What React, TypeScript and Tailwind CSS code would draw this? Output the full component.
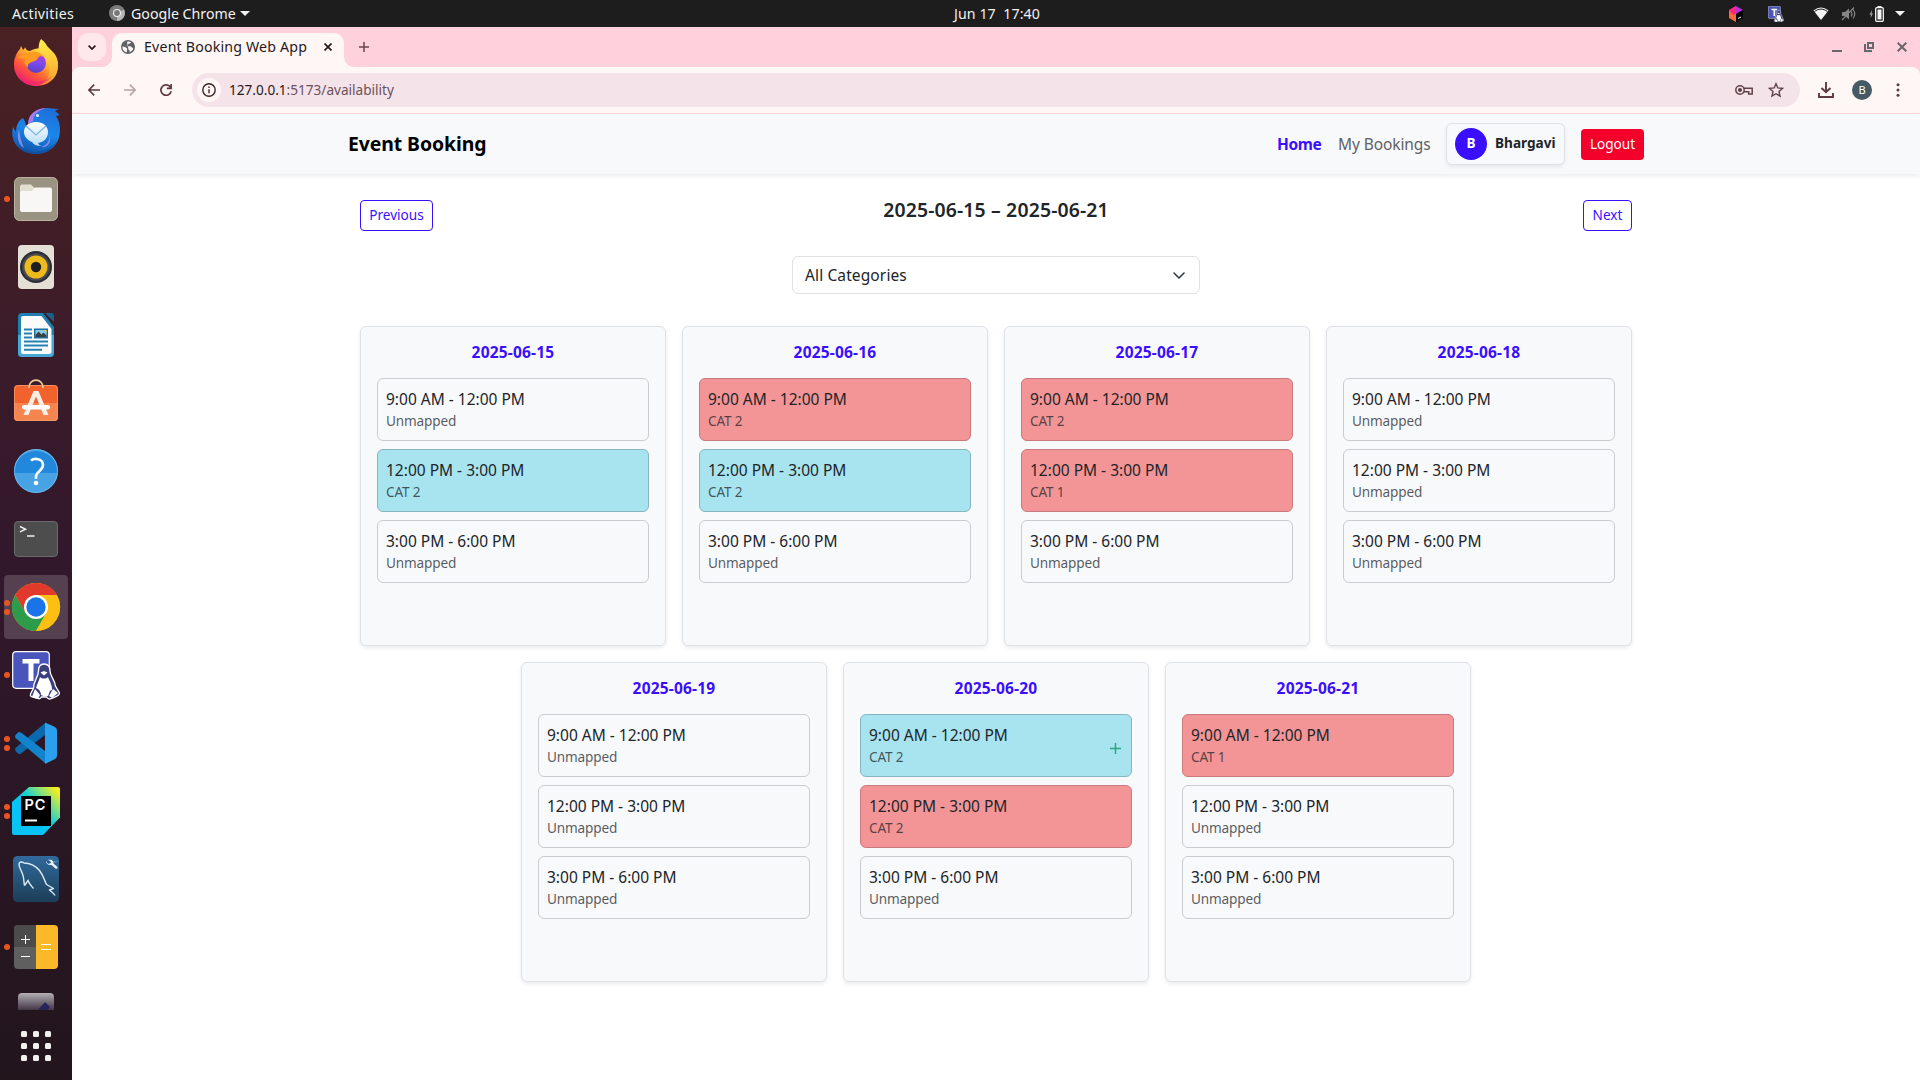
import React from "react";

type Status = "unmapped" | "open" | "full";
type Slot = { time: string; label: string; status: Status; add?: boolean };
type Day = { date: string; slots: Slot[] };

const T1 = "9:00 AM - 12:00 PM";
const T2 = "12:00 PM - 3:00 PM";
const T3 = "3:00 PM - 6:00 PM";

const un = (time: string): Slot => ({ time, label: "Unmapped", status: "unmapped" });
const open = (time: string, label: string, add = false): Slot => ({ time, label, status: "open", add });
const full = (time: string, label: string): Slot => ({ time, label, status: "full" });

const days: Day[] = [
  { date: "2025-06-15", slots: [un(T1), open(T2, "CAT 2"), un(T3)] },
  { date: "2025-06-16", slots: [full(T1, "CAT 2"), open(T2, "CAT 2"), un(T3)] },
  { date: "2025-06-17", slots: [full(T1, "CAT 2"), full(T2, "CAT 1"), un(T3)] },
  { date: "2025-06-18", slots: [un(T1), un(T2), un(T3)] },
  { date: "2025-06-19", slots: [un(T1), un(T2), un(T3)] },
  { date: "2025-06-20", slots: [open(T1, "CAT 2", true), full(T2, "CAT 2"), un(T3)] },
  { date: "2025-06-21", slots: [full(T1, "CAT 1"), un(T2), un(T3)] },
];

const slotStyle: Record<Status, string> = {
  unmapped: "border-[#cacccf] bg-[#f8f9fb]",
  open: "border-[#86b6c0] bg-[#a8e4f0]",
  full: "border-[#c87a7d] bg-[#f39596]",
};

function Icon({ size = 64, children }: { size?: number; children: React.ReactNode }) {
  return (
    <svg width={size} height={size} viewBox="0 0 64 64" className="block">
      {children}
    </svg>
  );
}

function Firefox() {
  return (
    <Icon>
      <defs>
        <linearGradient id="ff1" x1="0.85" y1="0.1" x2="0.2" y2="0.95">
          <stop offset="0" stopColor="#fff44f" />
          <stop offset="0.35" stopColor="#ffb22c" />
          <stop offset="0.65" stopColor="#ff5a36" />
          <stop offset="1" stopColor="#ec1a7a" />
        </linearGradient>
        <linearGradient id="ff2" x1="0.6" y1="0" x2="0.4" y2="1">
          <stop offset="0" stopColor="#b833e1" />
          <stop offset="0.5" stopColor="#7a4bf0" />
          <stop offset="1" stopColor="#5b3fc4" />
        </linearGradient>
        <linearGradient id="ff3" x1="0" y1="0" x2="0" y2="1">
          <stop offset="0" stopColor="#fff04a" />
          <stop offset="1" stopColor="#ff9a2a" />
        </linearGradient>
      </defs>
      <path d="M11 27c1-4 3-7 5-9l1-3 2 4c1-1 2-2 2-3 1 3 3 4 5 4 8-5 17-3 21 3l5 4c3 8 2 15-2 20-5 6-11 8-18 8-12 0-22-9-22-21 0-3 0-5 1-7z" fill="url(#ff1)" />
      <path d="M37 8c3 2 5 5 6 7l5 5c4 4 6 8 6 14 0 10-7 19-18 20 9-5 12-14 8-22-2-5-7-7-9-12-1-4 0-9 2-12z" fill="url(#ff3)" />
      <circle cx="32" cy="32" r="10" fill="url(#ff2)" />
      <path d="M23 22c5-2 12-2 15 2l2 2c-3-1-5-1-6 1-1 3-4 3-6 4-3 1-5 3-4 6-4-4-5-8-1-9l-9-1c2-3 5-5 9-5z" fill="#ff9b20" />
      <path d="M14 42c5 9 24 12 34 3-5 7-11 9-17 9-7 0-14-4-17-12z" fill="#f0256f" opacity="0.6" />
    </Icon>
  );
}

function Thunderbird() {
  return (
    <Icon>
      <defs>
        <linearGradient id="tb1" x1="0.7" y1="0" x2="0.4" y2="1">
          <stop offset="0" stopColor="#1f6fd8" />
          <stop offset="0.5" stopColor="#1b86ea" />
          <stop offset="1" stopColor="#1154a8" />
        </linearGradient>
        <linearGradient id="tb2" x1="0" y1="0" x2="0" y2="1">
          <stop offset="0" stopColor="#ffffff" />
          <stop offset="1" stopColor="#b5dcfa" />
        </linearGradient>
      </defs>
      <path d="M9 28l3 5c0-7 3-12 7-14 2 3 3 6 3 9l3-1c1-9 8-18 18-18l12 1-4 2 5 4-4 1c3 4 4 9 4 14 0 14-10 24-24 24C18 55 5 45 9 28z" fill="url(#tb1)" />
      <path d="M24 25c0-9 7-16 19-16-9 2-13 6-14 13z" fill="#a57bf0" />
      <path d="M15 30c-3 9 0 16 5 19-3-6-4-12-5-19zM45 33c2 7-1 13-8 15 6 1 12-4 8-15z" fill="#7b8df0" />
      <path d="M32 23c7 0 12 4 12 10s-4 10-10 11c1 2 2 3 4 3-5 0-8-1-10-4-5-2-8-6-8-10 0-6 5-10 12-10z" fill="url(#tb2)" />
      <path d="M22 27l10 9 10-9" stroke="#7fb3e2" strokeWidth="1.3" fill="none" />
      <circle cx="33.500" cy="16.500" r="1.500" fill="#e6f1ff" />
      <path d="M12 44c10 12 30 12 41-2-5 9-12 13-21 13-8 0-16-4-20-11z" fill="#0e4c9c" opacity="0.6" />
    </Icon>
  );
}

function Files() {
  return (
    <Icon>
      <rect x="10.500" y="10.500" width="43" height="43" rx="5" fill="#9a9381" stroke="#b9b3a2" />
      <path d="M16 19.500q0-2 2-2h9l4 4h15q2 0 2 2V30H16z" fill="#e2dfd0" />
      <path d="M16 26q0-2 2-2h10l3-3.500h15q2 0 2 2V43q0 2-2 2H18q-2 0-2-2z" fill="#f8f7f5" />
    </Icon>
  );
}

function Rhythmbox() {
  return (
    <Icon>
      <rect x="14" y="10" width="36" height="44" rx="4" fill="#e4e0d6" />
      <circle cx="32" cy="32" r="16" fill="#2c2d35" />
      <circle cx="32" cy="32" r="13.800" fill="#4a4b52" />
      <circle cx="32" cy="32" r="11.500" fill="#eebb1c" />
      <circle cx="32" cy="32" r="5.200" fill="#1f1f1f" />
    </Icon>
  );
}

function Writer() {
  return (
    <Icon>
      <path d="M18 10h21l11 14v26q0 4-4 4H18q-4 0-4-4V14q0-4 4-4z" fill="#1f7fb0" />
      <path d="M14 32h36v18q0 4-4 4H18q-4 0-4-4z" fill="#47a7d6" />
      <path d="M41 10h6q3 0 3 3v6z" fill="#15618c" />
      <path d="M19 13h18.500l10 13v22.500q0 2.500-2.500 2.500H19q-2 0-2-2V15q0-2 2-2z" fill="#fbfbfb" />
      <path d="M20 26.500h8M20 30.500h8M20 34.500h8M20 38.500h24M20 42.500h24M20 46.800h18" stroke="#2782b4" strokeWidth="2" />
      <rect x="30" y="25.500" width="14" height="10" fill="#1a6f9f" />
      <rect x="31.500" y="27" width="11" height="7" fill="#8ccbe8" />
      <path d="M31.500 34v-2l3-3.500 3 3 2-2 3 3V34z" fill="#3b3f45" />
      <path d="M40 27h2.500v3z" fill="#f4c61c" />
    </Icon>
  );
}

function Software() {
  return (
    <Icon>
      <path d="M14 14h36q4 0 4 4v28q0 4-4 4H14q-4 0-4-4V18q0-4 4-4z" fill="#f2622c" />
      <path d="M10 32h44v14q0 4-4 4H14q-4 0-4-4z" fill="#f5844f" />
      <path d="M10.500 18q0-3.500 3.500-3.500h36q3.500 0 3.500 3.500v28q0 3.500-3.500 3.500H14q-3.500 0-3.500-3.500z" fill="none" stroke="#f59a6c" strokeWidth="0.800" />
      <path d="M25 17c-.5-10.500 14.500-10.500 14 0" stroke="#eecb98" strokeWidth="1.600" fill="none" />
      <path d="M29.500 20h5l10 24h-5L32 25.500 24.500 44h-5z" fill="#fbeee6" />
      <rect x="18" y="34" width="28" height="4.600" rx="2.300" fill="#fff" />
    </Icon>
  );
}

function Help() {
  return (
    <Icon>
      <circle cx="32" cy="32" r="22" fill="#47a3e3" />
      <path d="M10 34a22 22 0 0 1 44 0z" fill="#2288dc" />
      <circle cx="32" cy="32" r="21.500" fill="none" stroke="#74bdee" strokeWidth="0.800" />
      <path d="M27 21.500c3-2.500 12-2.500 12 4.500 0 6-7 6-7 12v2" stroke="#fff" strokeWidth="2.600" fill="none" />
      <circle cx="32" cy="44" r="2.300" fill="#fff" />
    </Icon>
  );
}

function Terminal() {
  return (
    <Icon>
      <rect x="10.500" y="14.500" width="43" height="35" rx="3.500" fill="#4d4d4d" stroke="#6b6b6b" />
      <path d="M16 19.500l5.500 2.700-5.500 2.700M23 29h7.500" stroke="#f2f2f2" strokeWidth="1.500" fill="none" />
    </Icon>
  );
}

function Chrome() {
  return (
    <Icon>
      <circle cx="32" cy="32" r="24" fill="#fbbc05" />
      <path d="M32 20L52.800 20A24 24 0 0 0 11.200 20L21.600 38z" fill="#e2392d" />
      <path d="M11.200 20A24 24 0 0 0 32 56L42.400 38 32 32 21.600 38z" fill="#2c9c4b" />
      <path d="M32 56A24 24 0 0 0 52.800 20H32l10.400 18z" fill="#fcbf12" />
      <circle cx="32" cy="32" r="12" fill="#fff" />
      <circle cx="32" cy="32" r="9.700" fill="#1a73e8" />
    </Icon>
  );
}

function TeamsArt() {
  return (
    <>
      <rect x="8.700" y="8.700" width="36.600" height="36.600" rx="3.500" fill="#4a55bb" stroke="#fff" strokeWidth="1.200" />
      <path d="M18.500 16h17v4.500h-6V38h-5V20.500h-6z" fill="#fff" />
      <path d="M40 21c4 0 6 3 6 7 0 5 5 9 5.500 15l4 7c0 3-3 3-8 5.500-3 1.500-4 0-5-1.500h-5c-1 2-3 2-5 1-4-1-7-1-6-4l3-6c0-7 5-11 5-17 0-4 2-7 5.500-7z" fill="#3d3f7d" stroke="#fff" strokeWidth="1.300" />
      <path d="M36 34c2 2 6 2 8 0 2 5 4 8 4 13-3 0-3 5-4 6-3 1-5 0-7-1 0-3-2-6-5-7 1-4 3-7 4-11z" fill="#fff" />
      <path d="M36.500 29.500l3.500-1.500 3.500 1.500-3.500 3z" fill="#fff" />
      <path d="M31 46l5 6-2 4-6-2zM49 46l5 4-6 5-3-2z" fill="#fff" />
    </>
  );
}

function VSCode() {
  return (
    <Icon>
      <path d="M41 12v12L17 42.500q-1.500 1-3 0l-2.500-2.500q-1-1.500 0-3z" fill="#0c68ad" />
      <path d="M41 52V40L17 21.500q-1.500-1-3 0L11.500 24q-1 1.500 0 3z" fill="#1283cd" />
      <path d="M41 11.500l9.500 4.300q2.500 1 2.500 3.700v25q0 2.700-2.500 3.700L41 53z" fill="#2ba0ef" />
    </Icon>
  );
}

function PyCharm() {
  return (
    <Icon>
      <defs>
        <linearGradient id="pc1" gradientUnits="userSpaceOnUse" x1="26" y1="36" x2="54" y2="10">
          <stop offset="0" stopColor="#08c3f5" />
          <stop offset="0.3" stopColor="#18cfd0" />
          <stop offset="0.65" stopColor="#8ee374" />
          <stop offset="0.95" stopColor="#f4ee22" />
        </linearGradient>
      </defs>
      <path d="M25 8h29q2 0 2 2v28.500L39 56H10q-2 0-2-2V23z" fill="url(#pc1)" />
      <rect x="17" y="17" width="30" height="30" fill="#000" />
      <text x="20.500" y="31" fill="#fff" fontFamily="Inter, sans-serif" fontSize="14.500" fontWeight="600" textLength="21">PC</text>
      <rect x="21" y="40.500" width="12" height="2" fill="#fff" />
    </Icon>
  );
}

function MySQL() {
  return (
    <Icon>
      <defs>
        <linearGradient id="my1" x1="0" y1="0" x2="0" y2="1">
          <stop offset="0" stopColor="#316a9b" />
          <stop offset="1" stopColor="#1c3e58" />
        </linearGradient>
      </defs>
      <rect x="9" y="9" width="46" height="46" rx="4.500" fill="url(#my1)" />
      <path d="M20.500 38.500c-1-5-.500-7-1.500-10-1-4-4-8-4-11 0-3 3-3 5-1.500 7 0 12 3.500 15.500 7.500 4 5 5 10 7 14l7 4-4 1.500c2 2 4 3 5.500 5.500" stroke="#dcecf6" strokeWidth="1.400" fill="none" strokeLinejoin="round" />
      <path d="M20.500 38.500l3.500-5c1 3 3 5 5.500 8" stroke="#dcecf6" strokeWidth="1.400" fill="none" />
      <path d="M44 12.500l3 .500 2 2.500 6-1-8 .500zM42 14l2 3 3-1-.500-3.500c2 .500 3 2 3 4l4 3.500q.500 2-1.500 2l-4.500-4c-3 .500-5.500-1-5.500-4z" fill="#e9f2f8" />
    </Icon>
  );
}

function Calculator() {
  return (
    <Icon>
      <path d="M14 10h18v44H14q-4 0-4-4V14q0-4 4-4z" fill="#5f5f5f" />
      <path d="M14 10h18v22H10V14q0-4 4-4z" fill="#4b4b4b" />
      <path d="M32 10h18q4 0 4 4v36q0 4-4 4H32z" fill="#fbb829" />
      <path d="M21.500 20v9M17 24.500h9M17 41.500h9M37 29.500h10M37 34.500h10" stroke="#fff" strokeWidth="1" />
    </Icon>
  );
}

function Hidden() {
  return (
    <Icon>
      <defs>
        <linearGradient id="hd1" x1="0" y1="0" x2="0" y2="1">
          <stop offset="0" stopColor="#b3aeb4" />
          <stop offset="0.420" stopColor="#3a2c3a" />
        </linearGradient>
      </defs>
      <rect x="14" y="10" width="36" height="44" rx="4" fill="url(#hd1)" />
      <path d="M33 28l8-9 5 5-3 4z" fill="#26255c" />
    </Icon>
  );
}

const dock: { id: string; art: React.ReactNode; dots: number; active?: boolean }[] = [
  { id: "firefox", art: <Firefox />, dots: 0 },
  { id: "thunderbird", art: <Thunderbird />, dots: 0 },
  { id: "files", art: <Files />, dots: 1 },
  { id: "rhythmbox", art: <Rhythmbox />, dots: 0 },
  { id: "writer", art: <Writer />, dots: 0 },
  { id: "software", art: <Software />, dots: 0 },
  { id: "help", art: <Help />, dots: 0 },
  { id: "terminal", art: <Terminal />, dots: 0 },
  { id: "chrome", art: <Chrome />, dots: 2, active: true },
  { id: "teams", art: <Icon><TeamsArt /></Icon>, dots: 1 },
  { id: "vscode", art: <VSCode />, dots: 2 },
  { id: "pycharm", art: <PyCharm />, dots: 2 },
  { id: "mysql", art: <MySQL />, dots: 0 },
  { id: "calculator", art: <Calculator />, dots: 1 },
  { id: "hidden", art: <Hidden />, dots: 0 },
];

function Dock() {
  return (
    <nav className="flex w-[72px] shrink-0 flex-col bg-linear-to-b from-[#4a2123] via-[#32182c] to-[#22151c] pt-0.5">
      <div className="flex h-[981px] flex-col overflow-hidden">
        {dock.map((d) => (
          <div key={d.id} className="flex h-[68px] shrink-0 items-center px-1">
            <div className={d.active ? "relative h-16 w-16 rounded bg-[#55404f]" : "relative h-16 w-16"}>
              {d.art}
              <div className="absolute top-0 left-0 flex h-16 w-1.5 flex-col items-center justify-center gap-[3px]">
                {d.dots > 0 && <span className="h-1.5 w-1.5 rounded-full bg-[#e95420]" />}
                {d.dots > 1 && <span className="h-1.5 w-1.5 rounded-full bg-[#e95420]" />}
              </div>
            </div>
          </div>
        ))}
      </div>
      <div className="mt-[21px] ml-[21px] grid w-[30px] grid-cols-3 gap-1.5">
        {Array.from({ length: 9 }, (_, i) => (
          <span key={i} className="h-1.5 w-1.5 rounded-[1.5px] bg-[#f2f0ee]" />
        ))}
      </div>
    </nav>
  );
}

function TopBar() {
  return (
    <header className="flex h-[27px] shrink-0 items-center bg-[#1d1d1d] text-[14.2px] text-[#f2f2f2]">
      <div className="flex w-[954px] items-center pl-3">
        <span className="w-[97px] tracking-[0.3px] whitespace-nowrap">Activities</span>
        <svg width="16" height="16" viewBox="0 0 16 16">
          <circle cx="8" cy="8" r="8" fill="#7c7c7c" />
          <path d="M8 8L15 4.500A8 8 0 0 1 8 16z" fill="#b5b5b5" />
          <circle cx="8" cy="8" r="4" fill="#f0f0f0" />
          <circle cx="8" cy="8" r="2.900" fill="#777" />
        </svg>
        <span className="ml-1.5 w-[109px] whitespace-nowrap">Google Chrome</span>
        <svg width="10" height="5" viewBox="0 0 10 5"><path d="M0 0h10L5 5z" fill="#f2f2f2" /></svg>
      </div>
      <span className="tracking-[0.08px] whitespace-pre">Jun 17  17:40</span>
      <div className="ml-auto flex items-center pr-[15px]">
        <svg width="14" height="16" viewBox="0 0 14 16">
          <path d="M7 0L14 4 7 8 0 4z" fill="#c02be0" />
          <path d="M0 4l7 4v8L0 12z" fill="#ff6a3a" />
          <path d="M0 4l7-4v8l-3 1z" fill="#fb2a78" />
          <path d="M7 8l7-4v8l-7 4z" fill="#000" />
          <path d="M9 12.500l3-1.500" stroke="#fff" />
        </svg>
        <svg className="ml-[25px]" width="16" height="16" viewBox="8 8 48 48"><TeamsArt /></svg>
        <svg className="ml-[29px]" width="16" height="13" viewBox="0 0 16 13">
          <path d="M0.500 3.500Q8-2.500 15.500 3.500L8 13z" fill="#f5f5f5" />
          <path d="M1.500 4.500Q8-.500 14.500 4.500" stroke="#1d1d1d" strokeWidth="1" fill="none" />
        </svg>
        <svg className="ml-3" width="16" height="14" viewBox="0 0 16 14" fill="none" stroke="#858585" strokeWidth="1.200">
          <path d="M1 5h3l4-3.500v11L4 9H1z" fill="#858585" stroke="none" />
          <path d="M10 4.500q2 2.500 0 5M12 2.500q3.500 4.500 0 9M1 13L13 .500" />
        </svg>
        <svg className="ml-3" width="15" height="16" viewBox="0 0 15 16">
          <path d="M3 4L0.500 8.500h1.500L1.500 12 4 7.500H2.500z" fill="#aaa" />
          <rect x="6.700" y="1.700" width="7.600" height="13.600" rx="1" fill="none" stroke="#f5f5f5" strokeWidth="1.300" />
          <rect x="8.500" y="3.500" width="4" height="10" fill="#f5f5f5" />
          <rect x="8.500" y="0" width="4" height="1.500" fill="#f5f5f5" />
        </svg>
        <svg className="ml-[11px]" width="10" height="5" viewBox="0 0 10 5"><path d="M0 0h10L5 5z" fill="#f2f2f2" /></svg>
      </div>
    </header>
  );
}

function TabStrip() {
  return (
    <div className="flex h-10 shrink-0 items-end bg-[#ffd1dc] pl-1.5">
      <div className="mb-1.5 flex h-7 w-7 items-center justify-center rounded-[10px] bg-[#ffe8ec]">
        <svg width="8" height="5" viewBox="0 0 8 5" fill="none" stroke="#28181b" strokeWidth="1.700"><path d="M.600.600L4 4l3.400-3.400" /></svg>
      </div>
      <div className="-ml-1 h-2.5 w-2.5 bg-[#fff7f5]"><div className="h-2.5 w-2.5 rounded-br-[10px] bg-[#ffd1dc]" /></div>
      <div className="flex h-[34px] w-[232px] items-center rounded-t-[10px] bg-[#fff7f5] pb-1.5 pl-[9px]">
        <svg width="14" height="14" viewBox="0 0 14 14">
          <circle cx="7" cy="7" r="7" fill="#5f6368" />
          <path d="M1.500 6.500c2 .500 4 .500 4.500 2 .500 1-.500 2 0 3.800C3 12 1.200 9.500 1.500 6.500zM6 2c1.500-.800 3-.500 4 .200-.500 1-1.500 1.500-2.700 1.500C7 5 6.500 5.500 5 5.500c0 0 2.500.800 4 .800 1.500.200 1.500 1.500 3.200 1.700-.200 2-1.800 3.700-3.700 4.200.500-1.500-.200-2.200-1-2.800" fill="#fff7f5" />
        </svg>
        <span className="ml-[9px] w-[180px] text-[14.2px] tracking-[0.18px] whitespace-nowrap text-[#28181b]">Event Booking Web App</span>
        <svg width="8" height="8" viewBox="0 0 8 8" stroke="#28181b" strokeWidth="1.700"><path d="M.500.500l7 7M7.500.500l-7 7" /></svg>
      </div>
      <div className="h-2.5 w-2.5 bg-[#fff7f5]"><div className="h-2.5 w-2.5 rounded-bl-[10px] bg-[#ffd1dc]" /></div>
      <svg className="mb-[15px] ml-[5px]" width="10" height="10" viewBox="0 0 10 10" stroke="#6a464d" strokeWidth="1.500"><path d="M5 0v10M0 5h10" /></svg>
      <div className="mb-[15px] ml-auto flex items-end pr-[13px]">
        <svg width="10" height="10" viewBox="0 0 10 10"><rect y="8" width="10" height="2" fill="#66666b" /></svg>
        <svg className="ml-[22px]" width="10" height="10" viewBox="0 0 10 10" fill="none" stroke="#66666b" strokeWidth="2"><path d="M4 1h5v5H4zM1 2v7h7" /></svg>
        <svg className="ml-[23px]" width="10" height="10" viewBox="0 0 10 10" stroke="#66666b" strokeWidth="2"><path d="M.700.700l8.600 8.600M9.300.700L.700 9.300" /></svg>
      </div>
    </div>
  );
}

function Toolbar() {
  return (
    <div className="flex h-[47px] shrink-0 bg-[#ffd1dc]">
      <div className="flex flex-1 items-center rounded-t-lg border-b border-[#fbd3da] bg-[#fff7f5] pl-4">
        <svg width="12" height="12" viewBox="0 0 12 12" fill="none" stroke="#5f3a41" strokeWidth="1.600"><path d="M12 6H1M6.200.600L.900 6l5.300 5.400" /></svg>
        <svg className="ml-6" width="12" height="12" viewBox="0 0 12 12" fill="none" stroke="#b9a3a6" strokeWidth="1.600"><path d="M0 6h11M5.800.600L11.100 6l-5.300 5.400" /></svg>
        <svg className="ml-6" width="12" height="12" viewBox="0 0 12 12" fill="none" stroke="#5f3a41" strokeWidth="1.700"><path d="M11.200 7.200A5.200 5.200 0 1 1 9.800 2.400L11 3.800M11.200 0v4.400H6.800" /></svg>
        <div className="ml-5 flex h-[34px] w-[1608px] items-center rounded-full bg-[#f5e3ea] pl-[5px]">
          <div className="flex h-6 w-6 items-center justify-center rounded-full bg-[#fff7f5]">
            <svg width="14" height="14" viewBox="0 0 14 14" fill="none" stroke="#3a2529" strokeWidth="1.400"><circle cx="7" cy="7" r="6.200" /><path d="M7 6.200v4M7 3.600v1.500" /></svg>
          </div>
          <span className="ml-2 text-[13.6px] whitespace-nowrap text-[#6b5158]"><span className="text-[#28181b]">127.0.0.1</span>:5173/availability</span>
          <svg className="ml-auto" width="18" height="12" viewBox="0 0 18 12" fill="none" stroke="#5f4349" strokeWidth="1.500">
            <circle cx="5" cy="6" r="4.200" /><circle cx="5" cy="6" r="1.300" fill="#5f4349" /><path d="M9 4.300h8.200v5.700h-3.500V7.800H9" />
          </svg>
          <svg className="mr-4 ml-[15px]" width="16" height="16" viewBox="0 0 16 16" fill="none" stroke="#5f4349" strokeWidth="1.400"><path d="M8 1.700l1.850 4.250 4.650.450-3.500 3.100 1 4.600L8 11.700l-4 2.400 1-4.600L1.500 6.400l4.650-.450z" /></svg>
        </div>
        <svg className="ml-[18px]" width="16" height="16" viewBox="0 0 16 16" fill="none" stroke="#5f3a41" strokeWidth="1.900"><path d="M8 0v10M3.500 6L8 10.300 12.500 6M1 11v4h14v-4" /></svg>
        <div className="ml-[18px] flex h-5 w-5 items-center justify-center rounded-full bg-[#455a64] text-[11px] text-white">B</div>
        <svg className="ml-6" width="4" height="14" viewBox="0 0 4 14" fill="#5f3a41"><circle cx="2" cy="1.700" r="1.500" /><circle cx="2" cy="7" r="1.500" /><circle cx="2" cy="12.300" r="1.500" /></svg>
      </div>
    </div>
  );
}

function NavBar() {
  return (
    <div className="flex h-[60px] shrink-0 items-center bg-[#f8f9fb] pr-[276px] pl-[276px] shadow-[0_2px_4px_rgba(0,0,0,0.075)]">
      <span className="text-[19.4px] font-bold tracking-[-0.08px] whitespace-nowrap text-black">Event Booking</span>
      <div className="ml-auto flex items-center">
        <span className="w-[61px] pt-px text-[15.5px] font-bold tracking-[-0.4px] whitespace-nowrap text-[#3a0fff]">Home</span>
        <span className="w-[108px] pt-px text-[15.5px] tracking-[-0.1px] whitespace-nowrap text-[#5f6164]">My Bookings</span>
        <div className="flex h-[42px] w-[119px] items-center rounded-md border border-[#dee2e6] bg-[#f8f9fb] pl-2 shadow-[0_2px_4px_rgba(0,0,0,0.075)]">
          <div className="flex h-8 w-8 items-center justify-center rounded-full bg-[#3a0fff] pb-px text-[13.6px] font-bold text-white">B</div>
          <span className="ml-2 pb-px text-[13.6px] font-bold whitespace-nowrap text-[#212529]">Bhargavi</span>
        </div>
        <button className="ml-4 h-[31px] w-[63px] rounded bg-[#f3002b] text-[13.6px] text-white">Logout</button>
      </div>
    </div>
  );
}

function SlotBox({ slot }: { slot: Slot }) {
  return (
    <div className={`flex h-[63px] items-center justify-between rounded-md border pr-2.5 pl-2 ${slotStyle[slot.status]}`}>
      <div>
        <div className="h-[22px] text-[15.5px] leading-[22px] whitespace-nowrap text-[#212529]">{slot.time}</div>
        <div className="h-[21px] text-[13.6px] leading-[21px] tracking-[-0.15px] whitespace-nowrap text-[#212529]/75">{slot.label}</div>
      </div>
      {slot.add && (
        <svg className="mt-1.5" width="11" height="11" viewBox="0 0 11 11" stroke="#2aa680" strokeWidth="1.500"><path d="M5.500 0v11M0 5.500h11" /></svg>
      )}
    </div>
  );
}

function DayCard({ day }: { day: Day }) {
  return (
    <section className="flex h-80 w-[306px] flex-col gap-2 rounded-md border border-[#dee2e6] bg-[#f8f9fb] px-4 pt-4 shadow-[0_2px_4px_rgba(0,0,0,0.075)]">
      <h5 className="h-[27px] text-center text-[15.5px] leading-[19px] font-bold tracking-[0.2px] text-[#3a0fff]">{day.date}</h5>
      {day.slots.map((s) => (
        <SlotBox key={s.time} slot={s} />
      ))}
    </section>
  );
}

export default function App() {
  return (
    <div className="flex h-[1080px] w-[1920px] flex-col overflow-hidden bg-white font-['Noto_Sans',sans-serif]">
      <TopBar />
      <div className="flex min-h-0 flex-1">
        <Dock />
        <div className="flex min-w-0 flex-1 flex-col">
          <TabStrip />
          <Toolbar />
          <NavBar />
          <main className="flex flex-col items-center pt-[26px]">
            <div className="grid h-[31px] w-[1272px] grid-cols-[73px_1fr_73px]">
              <button className="h-[31px] w-[73px] rounded border border-[#3a0fff] text-[13.6px] text-[#3a0fff]">Previous</button>
              <h4 className="text-center text-[19.4px] leading-[20px] font-semibold tracking-[0.16px] text-[#212529]">2025-06-15 – 2025-06-21</h4>
              <button className="h-[31px] w-[49px] justify-self-end rounded border border-[#3a0fff] text-[13.6px] text-[#3a0fff]">Next</button>
            </div>
            <div className="mt-[25px] flex h-[38px] w-[408px] items-center justify-between rounded-md border border-[#dee2e6] bg-white pr-3.5 pl-3 text-[15.5px] text-[#212529]">
              <span className="pt-px tracking-[0.12px]">All Categories</span>
              <svg width="12" height="7" viewBox="0 0 12 7" fill="none" stroke="#343a40" strokeWidth="1.600" strokeLinecap="round" strokeLinejoin="round"><path d="M1 1l5 5 5-5" /></svg>
            </div>
            <div className="mt-8 flex w-[1272px] flex-wrap justify-center gap-4">
              {days.map((d) => (
                <DayCard key={d.date} day={d} />
              ))}
            </div>
          </main>
        </div>
      </div>
    </div>
  );
}
